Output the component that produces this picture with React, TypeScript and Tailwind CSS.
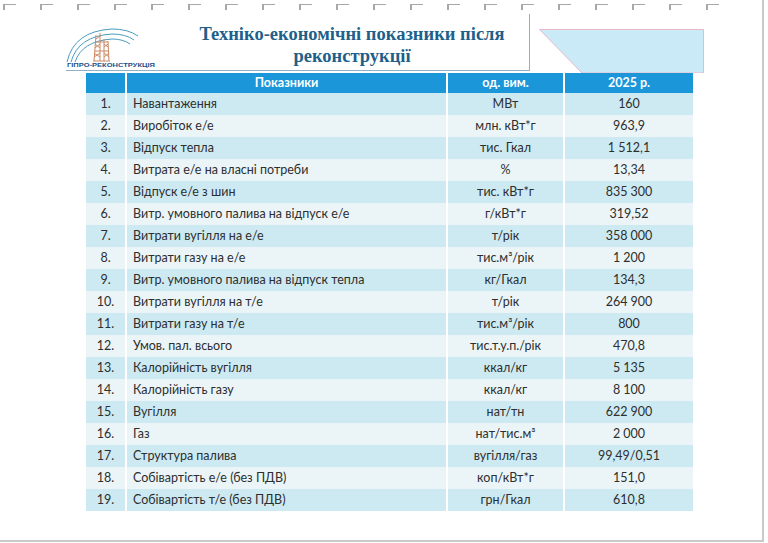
const ROWS: [string, string, string][] = [
  ["Навантаження", "МВт", "160"],
  ["Виробіток е/е", "млн. кВт*г", "963,9"],
  ["Відпуск тепла", "тис. Гкал", "1 512,1"],
  ["Витрата е/е на власні потреби", "%", "13,34"],
  ["Відпуск е/е з шин", "тис. кВт*г", "835 300"],
  ["Витр. умовного палива на відпуск е/е", "г/кВт*г", "319,52"],
  ["Витрати вугілля на е/е", "т/рік", "358 000"],
  ["Витрати газу на е/е", "тис.м³/рік", "1 200"],
  ["Витр. умовного палива на відпуск тепла", "кг/Гкал", "134,3"],
  ["Витрати вугілля на т/е", "т/рік", "264 900"],
  ["Витрати газу на т/е", "тис.м³/рік", "800"],
  ["Умов. пал. всього", "тис.т.у.п./рік", "470,8"],
  ["Калорійність вугілля", "ккал/кг", "5 135"],
  ["Калорійність газу", "ккал/кг", "8 100"],
  ["Вугілля", "нат/тн", "622 900"],
  ["Газ", "нат/тис.м³", "2 000"],
  ["Структура палива", "вугілля/газ", "99,49/0,51"],
  ["Собівартість е/е (без ПДВ)", "коп/кВт*г", "151,0"],
  ["Собівартість т/е (без ПДВ)", "грн/Гкал", "610,8"],
];

function Logo() {
  return (
    <svg width="92" height="41" viewBox="0 0 92 41">
      {/* signal arcs */}
      <g fill="none" stroke="#4a9cc0" strokeWidth="1">
        <path d="M1 35 Q8 4 46 2 Q62 2 72 9" />
        <path d="M5 35 Q12 9 46 7 Q60 7 68 13" />
        <path d="M9 35 Q16 14 46 12 Q57 12 64 17" />
      </g>
      {/* tower */}
      <g fill="none" stroke="#c98a64" strokeWidth="1">
        <path d="M28 34 L30 8 M34 34 L34 6 M38 34 L38 12 M43 34 L42 14" />
        <path d="M28 30 L34 26 M28 26 L34 30 M29 21 L34 17 M29 17 L34 21 M30 12 L34 9 M38 30 L43 26 M38 26 L43 30 M38 20 L42 17 M38 17 L42 20" />
        <path d="M27 34 H44 M29 24 H43 M30 15 H42" />
      </g>
      <text
        x="1"
        y="40"
        fontSize="6"
        fontWeight="700"
        fill="#1d4f8a"
        textLength="88"
        lengthAdjust="spacingAndGlyphs"
        fontFamily="Liberation Sans, sans-serif"
      >
        ГІПРО-РЕКОНСТРУКЦІЯ
      </text>
    </svg>
  );
}

export default function App() {
  return (
    <div className="w-[768px] h-[543px] bg-white overflow-hidden">
      <div className="w-[764px] h-[542px] border-r-2 border-b-2 border-[#c9c9c9] flex flex-col">
        {/* registration marks */}
        <div className="flex gap-[24px] pl-[3px] pt-[4px] h-[14px] overflow-hidden">
          {Array.from({ length: 20 }).map((_, i) => (
            <div key={i} className="w-[13px] h-[6px] shrink-0 border-l-2 border-t border-[#a8a8a8]" />
          ))}
        </div>

        {/* header */}
        <div className="flex items-end h-[59px]">
          <div className="ml-[66px] w-[464px] h-[57px] mb-[2px] flex border-b border-r border-[#8fb0c6]">
            <div className="mt-[13px]">
              <Logo />
            </div>
            <h1 className="ml-[32px] w-[324px] mt-[9px] text-center text-[18.5px] leading-[22px] font-bold text-[#205f8a] font-['Liberation_Serif',serif]">
              Техніко-економічні показники після
              <br />
              реконструкції
            </h1>
          </div>
          <svg width="165" height="44" viewBox="0 0 165 44" className="ml-[9px] block">
            <polygon points="0.5,0.5 164.5,0.5 164.5,44 43,44" fill="#c9eaf6" stroke="#e9b9c9" strokeWidth="1" />
          </svg>
        </div>

        {/* table */}
        <div className="ml-[86px] w-[607px] font-['Lato','Noto_Sans',sans-serif] text-[12.5px] text-[#2e2e2e]">
          <div className="grid grid-cols-[39px_319px_115px_128px] gap-x-[2px] h-[20px] bg-white">
            <div className="bg-[#1a96d9]" />
            <div className="bg-[#1a96d9] text-white font-bold flex items-center justify-center">Показники</div>
            <div className="bg-[#1a96d9] text-white font-bold flex items-center justify-center">од. вим.</div>
            <div className="bg-[#1a96d9] text-white font-bold flex items-center justify-center">2025 р.</div>
          </div>
          {ROWS.map(([name, unit, value], i) => {
            const bg = i % 2 === 0 ? "bg-[#cdeaf3]" : "bg-[#ebf5f8]";
            return (
              <div key={i} className="grid grid-cols-[39px_319px_115px_128px] gap-x-[2px] h-[22px] bg-white">
                <div className={`${bg} flex items-center justify-center`}>{i + 1}.</div>
                <div className={`${bg} flex items-center pl-[6px]`}>{name}</div>
                <div className={`${bg} flex items-center justify-center`}>{unit}</div>
                <div className={`${bg} flex items-center justify-center`}>{value}</div>
              </div>
            );
          })}
        </div>
      </div>
    </div>
  );
}
